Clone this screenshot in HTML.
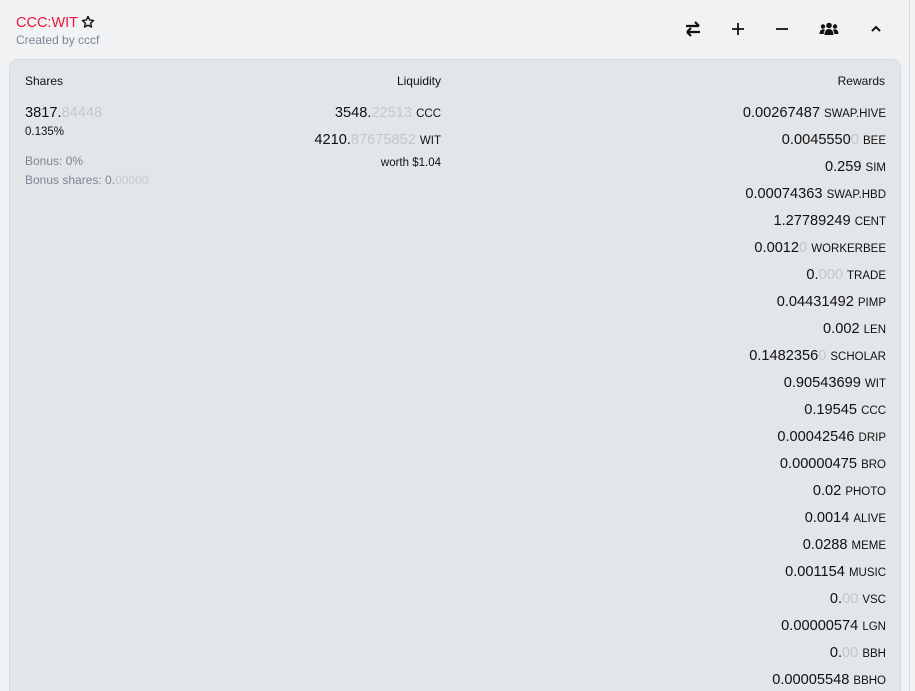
<!DOCTYPE html>
<html><head><style>
*{margin:0;padding:0;box-sizing:border-box}
html,body{width:915px;height:691px;overflow:hidden}
body{background:#f0f2f4;font-family:"Liberation Sans",Arial,sans-serif;color:#111;position:relative}
.vline{position:absolute;left:909px;top:0;width:1px;height:691px;background:#d9dcdf}
.title{position:absolute;left:16px;top:15px;font-size:14.5px;color:#e8173b}
.star{display:inline-block;vertical-align:-2px;margin-left:3px}
.sub{position:absolute;left:16px;top:33px;font-size:12px;color:#7a8794}
.icons{position:absolute;top:19px;height:20px}
.panel{position:absolute;left:9px;top:59px;width:892px;height:640px;background:#e3e6e9;border:1px solid #d8dbde;border-radius:9px}
.abs{position:absolute;white-space:nowrap}
.h{font-size:12px;top:74px}
.big{font-size:14.6px}
.g{color:#c3c8cd}
.t{font-size:11.5px}
.s{font-size:12px;color:#7a8794}
.rw{right:29px;text-align:right}
</style></head><body>
<div class="vline"></div>
<div class="title">CCC:WIT<svg class="star" width="14" height="14" viewBox="0 0 24 24"><path d="M12 2.5l2.9 6.1 6.6.8-4.9 4.6 1.3 6.6L12 17.3l-5.9 3.3 1.3-6.6-4.9-4.6 6.6-.8z" fill="none" stroke="#111" stroke-width="2.4" stroke-linejoin="round"/></svg></div>
<div class="sub">Created by cccf</div>
<svg class="icons" style="left:684px" width="18" height="20" viewBox="0 0 18 20"><path d="M2 7h13M11 3l4 4M16 13H3M7 9l-4 4M7 17l-4-4" fill="none" stroke="#111" stroke-width="2.2"/></svg>
<svg class="icons" style="left:731px" width="14" height="20" viewBox="0 0 14 20"><path d="M7 4v12M1 10h12" stroke="#111" stroke-width="1.8"/></svg>
<svg class="icons" style="left:775px" width="14" height="20" viewBox="0 0 14 20"><path d="M1 10h12" stroke="#111" stroke-width="1.8"/></svg>
<svg class="icons" style="left:819px" width="20" height="20" viewBox="0 0 20 20"><circle cx="10" cy="6.5" r="2.8" fill="#111"/><circle cx="4" cy="7.5" r="2.2" fill="#111"/><circle cx="16" cy="7.5" r="2.2" fill="#111"/><path d="M5.5 16c0-4 2-6 4.5-6s4.5 2 4.5 6z M0.5 15c0-3 1.5-4.8 3.5-4.8 1 0 1.6.3 2 .7-.8 1-1.2 2.5-1.3 4.1z M19.5 15c0-3-1.5-4.8-3.5-4.8-1 0-1.6.3-2 .7.8 1 1.2 2.5 1.3 4.1z" fill="#111"/></svg>
<svg class="icons" style="left:869px" width="14" height="20" viewBox="0 0 14 20"><path d="M3 12l4-4 4 4" fill="none" stroke="#111" stroke-width="2"/></svg>
<div class="panel"></div>
<div class="abs h" style="left:25px">Shares</div>
<div class="abs h" style="right:474px;text-align:right">Liquidity</div>
<div class="abs h" style="right:30px">Rewards</div>
<div class="abs big" style="left:25px;top:105px">3817.<span class="g">84448</span></div>
<div class="abs t" style="left:25px;top:126px">0.135%</div>
<div class="abs s" style="left:25px;top:154px">Bonus: 0%</div>
<div class="abs s" style="left:25px;top:173px">Bonus shares: 0.<span class="g">00000</span></div>
<div class="abs big" style="right:474px;top:105px">3548.<span class="g">22513</span> <span class="t">CCC</span></div>
<div class="abs big" style="right:474px;top:132px">4210.<span class="g">87675852</span> <span class="t">WIT</span></div>
<div class="abs t" style="right:474px;top:157px">worth $1.04</div>
<div class="abs big rw" style="top:105px">0.00267487 <span class="t">SWAP.HIVE</span></div>
<div class="abs big rw" style="top:132px">0.0045550<span class="g">0</span> <span class="t">BEE</span></div>
<div class="abs big rw" style="top:159px">0.259 <span class="t">SIM</span></div>
<div class="abs big rw" style="top:186px">0.00074363 <span class="t">SWAP.HBD</span></div>
<div class="abs big rw" style="top:213px">1.27789249 <span class="t">CENT</span></div>
<div class="abs big rw" style="top:240px">0.0012<span class="g">0</span> <span class="t">WORKERBEE</span></div>
<div class="abs big rw" style="top:267px">0.<span class="g">000</span> <span class="t">TRADE</span></div>
<div class="abs big rw" style="top:294px">0.04431492 <span class="t">PIMP</span></div>
<div class="abs big rw" style="top:321px">0.002 <span class="t">LEN</span></div>
<div class="abs big rw" style="top:348px">0.1482356<span class="g">0</span> <span class="t">SCHOLAR</span></div>
<div class="abs big rw" style="top:375px">0.90543699 <span class="t">WIT</span></div>
<div class="abs big rw" style="top:402px">0.19545 <span class="t">CCC</span></div>
<div class="abs big rw" style="top:429px">0.00042546 <span class="t">DRIP</span></div>
<div class="abs big rw" style="top:456px">0.00000475 <span class="t">BRO</span></div>
<div class="abs big rw" style="top:483px">0.02 <span class="t">PHOTO</span></div>
<div class="abs big rw" style="top:510px">0.0014 <span class="t">ALIVE</span></div>
<div class="abs big rw" style="top:537px">0.0288 <span class="t">MEME</span></div>
<div class="abs big rw" style="top:564px">0.001154 <span class="t">MUSIC</span></div>
<div class="abs big rw" style="top:591px">0.<span class="g">00</span> <span class="t">VSC</span></div>
<div class="abs big rw" style="top:618px">0.00000574 <span class="t">LGN</span></div>
<div class="abs big rw" style="top:645px">0.<span class="g">00</span> <span class="t">BBH</span></div>
<div class="abs big rw" style="top:672px">0.00005548 <span class="t">BBHO</span></div>
</body></html>
